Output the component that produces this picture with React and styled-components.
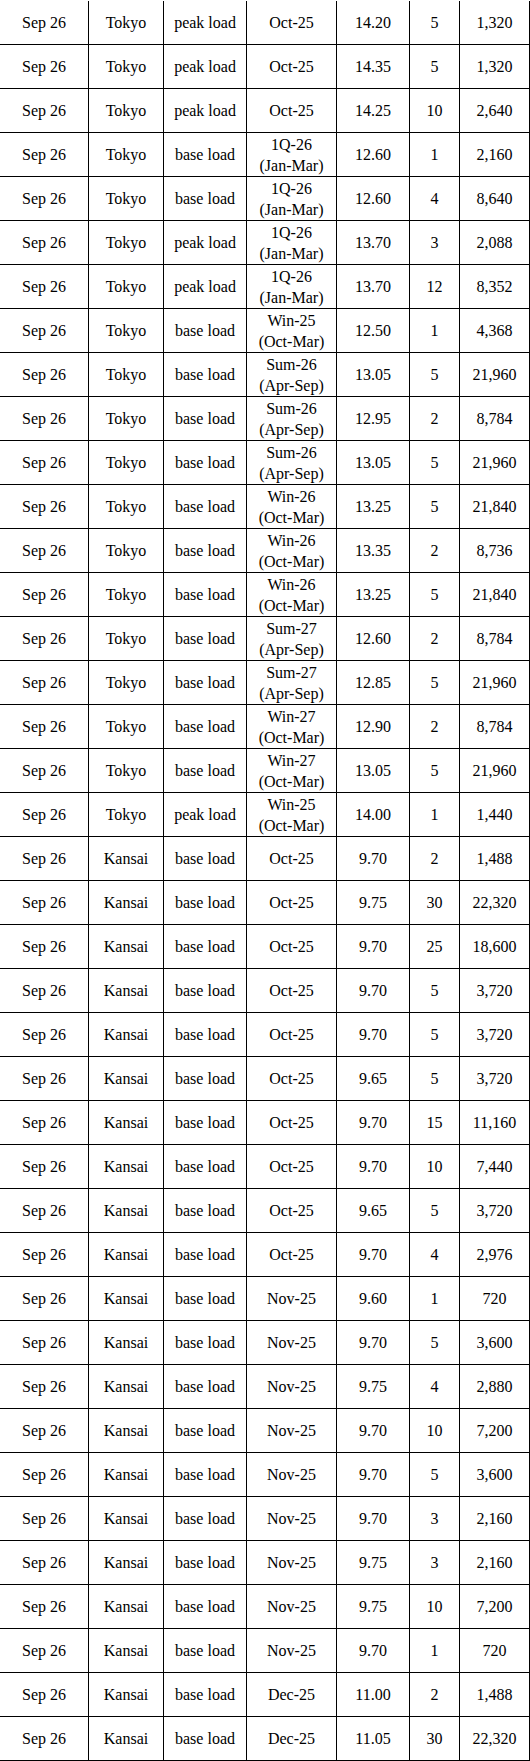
import React from 'react';
import styled, { createGlobalStyle } from 'styled-components';

const GlobalStyle = createGlobalStyle`
  html, body {
    margin: 0;
    padding: 0;
    background: #fff;
  }
  body {
    padding-top: 1px;
    font-family: 'Liberation Serif', 'Times New Roman', serif;
    color: #000;
  }
`;

const rows = [
  ['Tokyo', 'peak load', 'Oct-25', '14.20', '5', '1,320'],
  ['Tokyo', 'peak load', 'Oct-25', '14.35', '5', '1,320'],
  ['Tokyo', 'peak load', 'Oct-25', '14.25', '10', '2,640'],
  ['Tokyo', 'base load', '1Q-26|(Jan-Mar)', '12.60', '1', '2,160'],
  ['Tokyo', 'base load', '1Q-26|(Jan-Mar)', '12.60', '4', '8,640'],
  ['Tokyo', 'peak load', '1Q-26|(Jan-Mar)', '13.70', '3', '2,088'],
  ['Tokyo', 'peak load', '1Q-26|(Jan-Mar)', '13.70', '12', '8,352'],
  ['Tokyo', 'base load', 'Win-25|(Oct-Mar)', '12.50', '1', '4,368'],
  ['Tokyo', 'base load', 'Sum-26|(Apr-Sep)', '13.05', '5', '21,960'],
  ['Tokyo', 'base load', 'Sum-26|(Apr-Sep)', '12.95', '2', '8,784'],
  ['Tokyo', 'base load', 'Sum-26|(Apr-Sep)', '13.05', '5', '21,960'],
  ['Tokyo', 'base load', 'Win-26|(Oct-Mar)', '13.25', '5', '21,840'],
  ['Tokyo', 'base load', 'Win-26|(Oct-Mar)', '13.35', '2', '8,736'],
  ['Tokyo', 'base load', 'Win-26|(Oct-Mar)', '13.25', '5', '21,840'],
  ['Tokyo', 'base load', 'Sum-27|(Apr-Sep)', '12.60', '2', '8,784'],
  ['Tokyo', 'base load', 'Sum-27|(Apr-Sep)', '12.85', '5', '21,960'],
  ['Tokyo', 'base load', 'Win-27|(Oct-Mar)', '12.90', '2', '8,784'],
  ['Tokyo', 'base load', 'Win-27|(Oct-Mar)', '13.05', '5', '21,960'],
  ['Tokyo', 'peak load', 'Win-25|(Oct-Mar)', '14.00', '1', '1,440'],
  ['Kansai', 'base load', 'Oct-25', '9.70', '2', '1,488'],
  ['Kansai', 'base load', 'Oct-25', '9.75', '30', '22,320'],
  ['Kansai', 'base load', 'Oct-25', '9.70', '25', '18,600'],
  ['Kansai', 'base load', 'Oct-25', '9.70', '5', '3,720'],
  ['Kansai', 'base load', 'Oct-25', '9.70', '5', '3,720'],
  ['Kansai', 'base load', 'Oct-25', '9.65', '5', '3,720'],
  ['Kansai', 'base load', 'Oct-25', '9.70', '15', '11,160'],
  ['Kansai', 'base load', 'Oct-25', '9.70', '10', '7,440'],
  ['Kansai', 'base load', 'Oct-25', '9.65', '5', '3,720'],
  ['Kansai', 'base load', 'Oct-25', '9.70', '4', '2,976'],
  ['Kansai', 'base load', 'Nov-25', '9.60', '1', '720'],
  ['Kansai', 'base load', 'Nov-25', '9.70', '5', '3,600'],
  ['Kansai', 'base load', 'Nov-25', '9.75', '4', '2,880'],
  ['Kansai', 'base load', 'Nov-25', '9.70', '10', '7,200'],
  ['Kansai', 'base load', 'Nov-25', '9.70', '5', '3,600'],
  ['Kansai', 'base load', 'Nov-25', '9.70', '3', '2,160'],
  ['Kansai', 'base load', 'Nov-25', '9.75', '3', '2,160'],
  ['Kansai', 'base load', 'Nov-25', '9.75', '10', '7,200'],
  ['Kansai', 'base load', 'Nov-25', '9.70', '1', '720'],
  ['Kansai', 'base load', 'Dec-25', '11.00', '2', '1,488'],
  ['Kansai', 'base load', 'Dec-25', '11.05', '30', '22,320'],
];

export default function App() {
  return (
    <>
      <GlobalStyle />
      <Table>
        {rows.map((r, i) => (
          <Row key={i}>
            <Cell>Sep 26</Cell>
            {r.map((v, j) => (
              <Cell key={j}>
                {v.split('|').map((line, k) => (
                  <Line key={k}>{line}</Line>
                ))}
              </Cell>
            ))}
          </Row>
        ))}
      </Table>
    </>
  );
}

const Table = styled.div`
  width: 530px;
  display: flex;
  flex-direction: column;
`;
const Row = styled.div`
  display: grid;
  grid-template-columns: 89px 75px 83px 90px 73px 50px 70px;
  height: 44px;
`;
const Cell = styled.div`
  display: flex;
  flex-direction: column;
  align-items: center;
  justify-content: center;
  text-align: center;
  border-right: 1px solid #000;
  border-bottom: 1px solid #000;
  font-size: 16px;
  line-height: 21px;
  white-space: nowrap;
  overflow: hidden;
`;
const Line = styled.span`
  display: block;
`;
